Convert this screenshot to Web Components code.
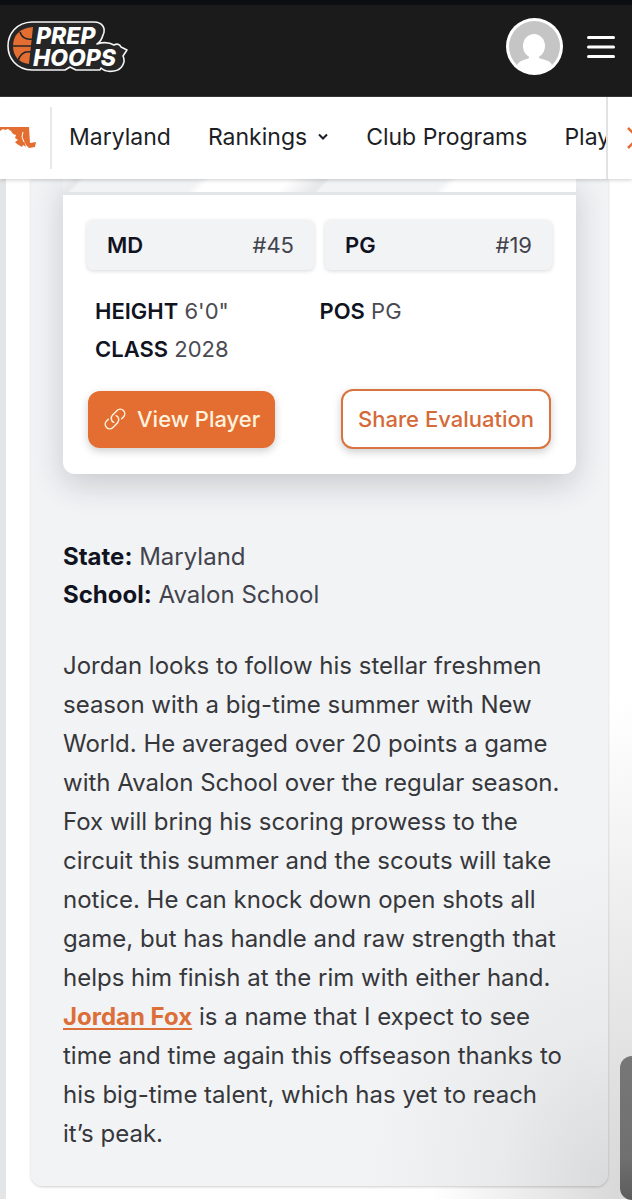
<!DOCTYPE html>
<html lang="en">
<head>
<meta charset="utf-8">
<meta name="viewport" content="width=device-width, initial-scale=1">
<title>Prep Hoops - Jordan Fox</title>
<style>
html{
    background:#fff
}
body{
    margin:0;
    font-family:Inter, "Liberation Sans", sans-serif;
    font-size:24px;
    color:#36373b;
    --orange:#e46e31;
    --panel:#f2f3f5;
    --ink:#11131f
}
</style>
</head>
<body>
<site-header></site-header>
<region-nav>
    <nav-item>Maryland</nav-item>
    <nav-item menu>Rankings</nav-item>
    <nav-item>Club Programs</nav-item>
    <nav-item>Play</nav-item>
</region-nav>
<eval-panel>
    <player-card slot="card">
        <rank-pill slot="rank" label="MD" rank="#45"></rank-pill>
        <rank-pill slot="rank" label="PG" rank="#19"></rank-pill>
        <label-value slot="fact" label="HEIGHT">6'0"</label-value>
        <label-value slot="fact" label="POS">PG</label-value>
        <label-value slot="fact" label="CLASS">2028</label-value>
    </player-card>
    <label-value slot="info" label="State:">Maryland</label-value>
    <label-value slot="info" label="School:">Avalon School</label-value>
    <eval-text>Jordan looks to follow his stellar freshmen season with a big-time summer with New World. He averaged over 20 points a game with Avalon School over the regular season. Fox will bring his scoring prowess to the circuit this summer and the scouts will take notice. He can knock down open shots all game, but has handle and raw strength that helps him finish at the rim with either hand. <a href="#jordan-fox">Jordan Fox</a> is a name that I expect to see time and time again this offseason thanks to his big-time talent, which has yet to reach it’s peak.</eval-text>
</eval-panel>
<side-handle></side-handle>

<script>
class SiteHeader extends HTMLElement{
    constructor(){
        super();
        this.attachShadow({mode:'open'})
    }
    connectedCallback(){
        this.shadowRoot.innerHTML=`
        <style>
        :host{
            display:flex;
            align-items:center;
            justify-content:space-between;
            box-sizing:border-box;
            height:97px;
            padding:0 17px 8px 5px;
            border-top:5px solid #0d0e12;
            border-bottom:1px solid #3a3839;
            background:#1b1b1b
        }
        svg{ display:block }
        .tools{
            display:flex;
            align-items:center;
            gap:24px
        }
        a, button{
            display:block;
            padding:0;
            border:0;
            background:none
        }
        </style>
        <a href="#home" aria-label="Prep Hoops">
            <svg width="124" height="56" viewBox="0 0 124 56">
                <path d="M27 3H89C98 3 101 10 98 16C97 20 95 23 92 25C98 23 104 23 109 26C113 24 115 26 116 28L122 31L118 37C121 43 117 51 109 52C103 53 98 51 96 49L95 51H71L65 48L60 51H27C-5 50-5 4 27 3Z" fill="#262626" stroke="#f4f4f4" stroke-width="1.6" stroke-linejoin="round"/>
                <path d="M28 8C14 9 8 17 8 27C8 37 14 44 24 45Z" fill="#e46e31"/>
                <path d="M8 27H27M15 13C17 19 22 21 28 20M13 42C15 35 20 32 26 33" fill="none" stroke="#262626" stroke-width="1.6"/>
                <g fill="#fff" font-family="Inter, sans-serif" font-weight="800" font-style="italic" font-size="23">
                    <text x="31" y="25">PREP</text>
                    <text x="28" y="47">HOOPS</text>
                </g>
            </svg>
        </a>
        <div class="tools">
            <a href="#account" aria-label="Account">
                <svg width="57" height="57" viewBox="0 0 57 57">
                    <circle cx="28.500" cy="28.500" r="28.500" fill="#fff"/>
                    <circle cx="28.500" cy="28.500" r="25.500" fill="#c5c5c5"/>
                    <ellipse cx="28" cy="28" rx="11" ry="12" fill="#fff"/>
                    <path d="M23 36H33V40C38 42 44 42 46 47C36 57 21 57 11 47C14 42 19 42 23 40Z" fill="#fff"/>
                </svg>
            </a>
            <button type="button" aria-label="Menu">
                <svg width="28" height="26" viewBox="0 0 28 26" stroke="#fff" stroke-width="3" stroke-linecap="round">
                    <path d="M1.500 3.500H26.500M1.500 13H26.500M1.500 22.500H26.500"/>
                </svg>
            </button>
        </div>
        `
    }
}
customElements.define('site-header',SiteHeader)

class RegionNav extends HTMLElement{
    constructor(){
        super();
        this.attachShadow({mode:'open'})
    }
    connectedCallback(){
        this.shadowRoot.innerHTML=`
        <style>
        :host{
            display:flex;
            position:relative;
            z-index:1;
            height:82px;
            background:#fff;
            color:#1d1e26;
            font-size:23px;
            box-shadow:0 1px 4px rgba(0,0,0,.2)
        }
        .state{
            display:flex;
            align-items:center;
            width:50px;
            margin:10px 0;
            border-right:2px solid #e8e8ea
        }
        nav{
            display:flex;
            flex:1;
            align-items:center;
            gap:37px;
            min-width:0;
            overflow:hidden;
            padding:0 0 2px 17px
        }
        button{
            width:26px;
            padding:0 0 0 19px;
            border:0;
            border-left:2px solid #e2e2e4;
            background:none;
            overflow:hidden
        }
        svg{ display:block }
        </style>
        <a class="state" href="#maryland" aria-label="Maryland home">
            <svg width="38" height="26" viewBox="0 0 38 26" fill="#e46e31">
                <path d="M0 2H29L30 18L36 17L35 22L29 23L26 20L24 16L26 22L23 20L22 22L17 19L15 17L18 15L15 13L16 10L13 9L11 6L8 4L5 5L3 4L0 6Z"/>
                <path d="M23 7L22 12L24 17" fill="none" stroke="#fff"/>
            </svg>
        </a>
        <nav><slot></slot></nav>
        <button type="button" aria-label="Scroll right">
            <svg width="12" height="22" viewBox="0 0 12 22" fill="none" stroke="#e46e31" stroke-width="2.500">
                <path d="M1 1L11 11L1 21"/>
            </svg>
        </button>
        `
    }
}
customElements.define('region-nav',RegionNav)

class NavItem extends HTMLElement{
    constructor(){
        super();
        this.attachShadow({mode:'open'})
    }
    connectedCallback(){
        const arrow = this.hasAttribute('menu')
            ? `<svg width="12" height="8" viewBox="0 0 12 8" fill="none" stroke="#1d1e26" stroke-width="2"><path d="M2 1.500L6 5.500L10 1.500"/></svg>`
            : ''
        this.shadowRoot.innerHTML=`
        <style>
        :host{
            display:block;
            flex:none
        }
        a{
            display:flex;
            align-items:center;
            gap:10px;
            color:inherit;
            line-height:32px;
            text-decoration:none
        }
        </style>
        <a href="#"><span><slot></slot></span>${arrow}</a>
        `
    }
}
customElements.define('nav-item',NavItem)

class RankPill extends HTMLElement{
    constructor(){
        super();
        this.attachShadow({mode:'open'})
    }
    connectedCallback(){
        this.shadowRoot.innerHTML=`
        <style>
        :host{
            display:flex;
            justify-content:space-between;
            padding:0 20px;
            border-radius:6px;
            background:var(--panel);
            box-shadow:0 1px 4px rgba(0,0,0,.16);
            font-size:22px;
            line-height:50px;
            color:#42434d
        }
        b{
            font-weight:600;
            color:var(--ink)
        }
        </style>
        <b>${this.getAttribute('label')}</b>
        <span>${this.getAttribute('rank')}</span>
        `
    }
}
customElements.define('rank-pill',RankPill)

class LabelValue extends HTMLElement{
    constructor(){
        super();
        this.attachShadow({mode:'open'})
    }
    connectedCallback(){
        this.shadowRoot.innerHTML=`
        <style>
        :host{
            display:block;
            line-height:38px
        }
        b{
            font-weight:var(--label-weight, 700);
            color:var(--ink)
        }
        </style>
        <b>${this.getAttribute('label')}</b> <slot></slot>
        `
    }
}
customElements.define('label-value',LabelValue)

class PlayerCard extends HTMLElement{
    constructor(){
        super();
        this.attachShadow({mode:'open'})
    }
    connectedCallback(){
        this.shadowRoot.innerHTML=`
        <style>
        :host{
            display:block;
            border-radius:0 0 12px 12px;
            background:#fff;
            box-shadow:0 10px 32px rgba(30,35,45,.2);
            font-size:22px;
            --label-weight:600
        }
        .banner{
            height:13px;
            border-bottom:3px solid #e4e5e9;
            background:linear-gradient(135deg, #f3f3f4, #e6e7e9 3%, #f2f3f5 4% 26%, #fff 28% 43%, #e6e7e9 50%, #f2f3f5 51% 73%, #fff 75%)
        }
        .ranks{
            display:grid;
            grid-template-columns:1fr 1fr;
            gap:11px;
            padding:25px 24px 0
        }
        .facts{
            display:grid;
            grid-template-columns:1fr 1fr;
            padding:22px 32px 0;
            color:#4a4b52
        }
        .actions{
            display:flex;
            align-items:center;
            justify-content:space-between;
            padding:21px 25px 25px
        }
        a, button{
            display:flex;
            align-items:center;
            box-sizing:border-box;
            height:57px;
            padding:0 15px;
            border:0;
            border-radius:12px;
            font:500 22px Inter, sans-serif;
            text-decoration:none;
            box-shadow:0 3px 8px rgba(0,0,0,.2)
        }
        a{
            gap:10px;
            background:var(--orange);
            color:#fff3df
        }
        button{
            height:60px;
            border:2px solid #d9743f;
            background:#fff;
            color:#d46a38
        }
        </style>
        <div class="banner"></div>
        <div class="ranks"><slot name="rank"></slot></div>
        <div class="facts"><slot name="fact"></slot></div>
        <div class="actions">
            <a href="#player">
                <svg width="24" height="24" viewBox="0 0 24 24" fill="none" stroke="#fff3df" stroke-width="1.500" stroke-linecap="round" stroke-linejoin="round">
                    <path d="M13.190 8.688a4.500 4.500 0 0 1 1.242 7.244l-4.500 4.500a4.500 4.500 0 0 1-6.364-6.364l1.757-1.757m13.350-.622 1.757-1.757a4.500 4.500 0 0 0-6.364-6.364l-4.500 4.500a4.500 4.500 0 0 0 1.242 7.244"/>
                </svg>
                View Player
            </a>
            <button type="button">Share Evaluation</button>
        </div>
        `
    }
}
customElements.define('player-card',PlayerCard)

class EvalText extends HTMLElement{
    constructor(){
        super();
        this.attachShadow({mode:'open'})
    }
    connectedCallback(){
        this.shadowRoot.innerHTML=`
        <style>
        :host{
            display:block;
            padding:32px 8px 0 0;
            line-height:39px
        }
        ::slotted(a){
            color:#dc6f38;
            font-weight:700;
            text-decoration-thickness:2px;
            text-underline-offset:3px
        }
        </style>
        <slot></slot>
        `
    }
}
customElements.define('eval-text',EvalText)

class EvalPanel extends HTMLElement{
    constructor(){
        super();
        this.attachShadow({mode:'open'})
    }
    connectedCallback(){
        this.shadowRoot.innerHTML=`
        <style>
        :host{
            display:block;
            padding:0 24px 13px 25px;
            border-left:6px solid #e4e5e7;
            background:radial-gradient(ellipse 200px 500px at 100% 100%, #d6d6d6, #fff)
        }
        section{
            padding:0 32px 33px;
            border-radius:0 0 12px 12px;
            background:radial-gradient(ellipse 240px 340px at 100% 100%, #d9dadc, #e9eaec 45%, var(--panel));
            box-shadow:0 1px 3px rgba(0,0,0,.2)
        }
        .info{
            padding-top:64px;
            color:#42434d
        }
        </style>
        <section>
            <slot name="card"></slot>
            <div class="info"><slot name="info"></slot></div>
            <slot></slot>
        </section>
        `
    }
}
customElements.define('eval-panel',EvalPanel)

class SideHandle extends HTMLElement{
    constructor(){
        super();
        this.attachShadow({mode:'open'})
    }
    connectedCallback(){
        // drawer tab that lies over the page at the window's right edge
        this.shadowRoot.innerHTML=`
        <style>
        :host{
            position:fixed;
            right:0;
            bottom:0;
            width:12px;
            height:144px;
            border-radius:16px 0 0 16px;
            background:linear-gradient(#777, #707070 70%, #5c5c5c)
        }
        </style>
        `
    }
}
customElements.define('side-handle',SideHandle)
</script>
</body>
</html>
